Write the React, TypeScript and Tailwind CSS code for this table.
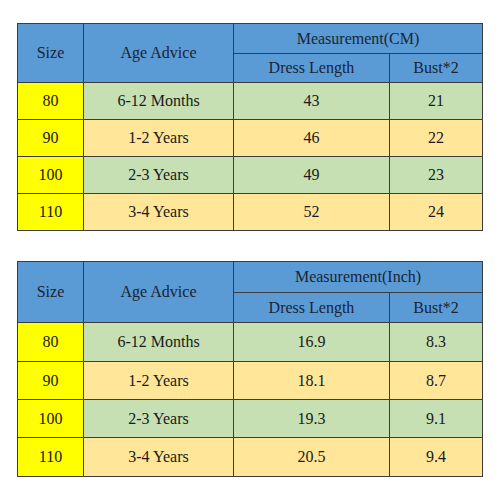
import React from 'react';

type Row = { size: string; age: string; length: string; bust: string };

const cmRows: Row[] = [
    { size: '80', age: '6-12 Months', length: '43', bust: '21' },
    { size: '90', age: '1-2 Years', length: '46', bust: '22' },
    { size: '100', age: '2-3 Years', length: '49', bust: '23' },
    { size: '110', age: '3-4 Years', length: '52', bust: '24' },
];

const inchRows: Row[] = [
    { size: '80', age: '6-12 Months', length: '16.9', bust: '8.3' },
    { size: '90', age: '1-2 Years', length: '18.1', bust: '8.7' },
    { size: '100', age: '2-3 Years', length: '19.3', bust: '9.1' },
    { size: '110', age: '3-4 Years', length: '20.5', bust: '9.4' },
];

const cell = 'border border-[#3c3c3c] text-center align-middle p-0';
const head = `${cell} bg-[#5b9bd5] font-normal text-[#1a2433]`;

// row heights for the body of each table
const cmHeights = ['h-[37px]', 'h-[37px]', 'h-[37px]', 'h-[37px]'];
const inchHeights = ['h-[39px]', 'h-[38px]', 'h-[38px]', 'h-[39px]'];

const SizeTable: React.FC<{ unit: string; rows: Row[]; tall?: boolean }> = ({ unit, rows, tall }) => {
    const heights = tall ? inchHeights : cmHeights;
    return (
        <table className="border-collapse table-fixed w-[465px] text-[16px] text-[#1a1a1a]">
            <colgroup>
                <col className="w-[66px]" />
                <col className="w-[150px]" />
                <col className="w-[156px]" />
                <col className="w-[93px]" />
            </colgroup>
            <thead>
                <tr className={tall ? 'h-[31px]' : 'h-[30px]'}>
                    <th rowSpan={2} className={head}>Size</th>
                    <th rowSpan={2} className={head}>Age Advice</th>
                    <th colSpan={2} className={head}>Measurement({unit})</th>
                </tr>
                <tr className={tall ? 'h-[30px]' : 'h-[29px]'}>
                    <th className={head}>Dress Length</th>
                    <th className={head}>Bust*2</th>
                </tr>
            </thead>
            <tbody>
                {rows.map((r, i) => {
                    const bg = i % 2 === 0 ? 'bg-[#c6e0b4]' : 'bg-[#ffe699]';
                    return (
                        <tr key={r.size} className={heights[i]}>
                            <td className={`${cell} bg-[#ffff00]`}>{r.size}</td>
                            <td className={`${cell} ${bg}`}>{r.age}</td>
                            <td className={`${cell} ${bg}`}>{r.length}</td>
                            <td className={`${cell} ${bg}`}>{r.bust}</td>
                        </tr>
                    );
                })}
            </tbody>
        </table>
    );
};

export default function App() {
    return (
        <div className="w-[500px] h-[500px] bg-white pl-[17px] pt-[23px] font-['Liberation_Serif',serif]">
            <div className="flex flex-col gap-[30px]">
                <SizeTable unit="CM" rows={cmRows} />
                <SizeTable unit="Inch" rows={inchRows} tall />
            </div>
        </div>
    );
}
